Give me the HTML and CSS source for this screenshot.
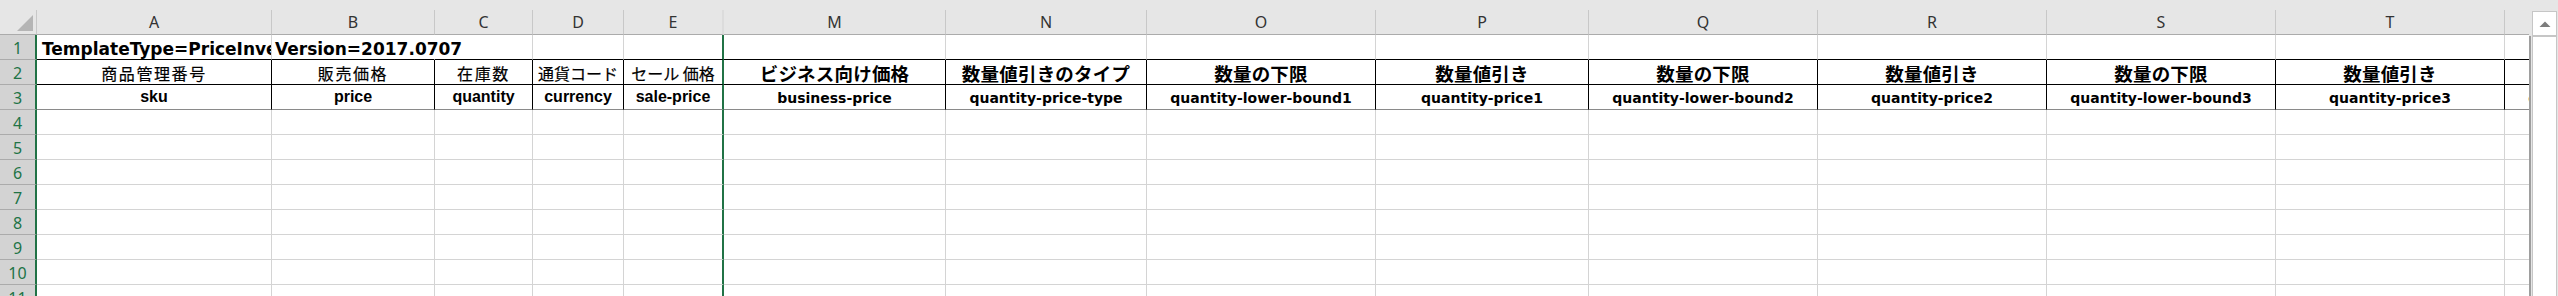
FILE: index.html
```html
<!DOCTYPE html>
<html lang="ja">
<head>
    <meta charset="UTF-8">
    <title>PriceInventory template</title>
    <link rel="stylesheet" href="styles.css">
</head>
<body>
    <div class="app">
        <div class="sheet">
            <div class="grid" id="grid">
                <!-- column headers -->
                <div class="c hd corner">
                    <svg width="36" height="24" viewBox="0 0 36 24"><polygon points="33,5 33,21 17,21" fill="#b5b5b5"/></svg>
                </div>
                <div class="c hd">A</div>
                <div class="c hd">B</div>
                <div class="c hd">C</div>
                <div class="c hd">D</div>
                <div class="c hd fz-hd">E</div>
                <div class="c hd">M</div>
                <div class="c hd">N</div>
                <div class="c hd">O</div>
                <div class="c hd">P</div>
                <div class="c hd">Q</div>
                <div class="c hd">R</div>
                <div class="c hd">S</div>
                <div class="c hd">T</div>
                <div class="c hd">U</div>

                <!-- row 1 -->
                <div class="c rh">1</div>
                <div class="c r1 tpl first">TemplateType=PriceInventory</div>
                <div class="c r1 tpl ovf">Version=2017.0707</div>
                <div class="c r1"></div>
                <div class="c r1"></div>
                <div class="c r1 fz"></div>
                <div class="c r1"></div>
                <div class="c r1"></div>
                <div class="c r1"></div>
                <div class="c r1"></div>
                <div class="c r1"></div>
                <div class="c r1"></div>
                <div class="c r1"></div>
                <div class="c r1"></div>
                <div class="c r1"></div>

                <!-- row 2 -->
                <div class="c rh">2</div>
                <div class="c r2 ja">商品管理番号</div>
                <div class="c r2 ja">販売価格</div>
                <div class="c r2 ja">在庫数</div>
                <div class="c r2 ja tight">通貨コード</div>
                <div class="c r2 ja tight fz">セール 価格</div>
                <div class="c r2 ja-b">ビジネス向け価格</div>
                <div class="c r2 ja-b">数量値引きのタイプ</div>
                <div class="c r2 ja-b">数量の下限</div>
                <div class="c r2 ja-b">数量値引き</div>
                <div class="c r2 ja-b">数量の下限</div>
                <div class="c r2 ja-b">数量値引き</div>
                <div class="c r2 ja-b">数量の下限</div>
                <div class="c r2 ja-b">数量値引き</div>
                <div class="c r2 ja-b">数量の下限</div>

                <!-- row 3 -->
                <div class="c rh">3</div>
                <div class="c r3 key">sku</div>
                <div class="c r3 key">price</div>
                <div class="c r3 key">quantity</div>
                <div class="c r3 key">currency</div>
                <div class="c r3 key fz">sale-price</div>
                <div class="c r3 key-b">business-price</div>
                <div class="c r3 key-b">quantity-price-type</div>
                <div class="c r3 key-b">quantity-lower-bound1</div>
                <div class="c r3 key-b">quantity-price1</div>
                <div class="c r3 key-b">quantity-lower-bound2</div>
                <div class="c r3 key-b">quantity-price2</div>
                <div class="c r3 key-b">quantity-lower-bound3</div>
                <div class="c r3 key-b">quantity-price3</div>
                <div class="c r3 key-b">quantity-lower-bound4</div>
            </div>
        </div>
        <div class="vscroll">
            <div class="vs-btn">
                <svg width="12" height="6" viewBox="0 0 12 6"><polygon points="0.5,6 6,0.5 11.5,6" fill="#7d7d7d"/></svg>
            </div>
            <div class="vs-track">
                <div class="vs-thumb"></div>
            </div>
        </div>
    </div>

    <script>
        // empty rows 4..11
        const grid = document.getElementById('grid');
        for (let r = 4; r <= 11; r++) {
            let html = `<div class="c rh">${r}</div>`;
            for (let i = 0; i < 14; i++) {
                html += `<div class="c${i === 4 ? ' fz' : ''}"></div>`;
            }
            grid.insertAdjacentHTML('beforeend', html);
        }
    </script>
</body>
</html>
```

FILE: styles.css
```css
html, body { margin: 0; padding: 0; }
body { background: #e6e6e6; height: 296px; overflow: hidden; font-family: "Noto Sans", sans-serif; color: #000; }
.app { display: flex; height: 296px; }

.sheet { flex: 0 0 2529px; width: 2529px; padding-top: 10px; overflow: hidden; }
.grid {
    display: grid;
    width: max-content;
    grid-template-columns: 37px 235px 163px 98px 91px 100px 222px 201px 229px 213px 229px 229px 229px 229px 229px;
    grid-auto-rows: 25px;
    background: #fff;
}

.c {
    box-sizing: border-box;
    border-right: 1px solid #d4d4d4;
    border-bottom: 1px solid #d4d4d4;
    display: flex;
    align-items: center;
    justify-content: center;
    white-space: nowrap;
    overflow: hidden;
    min-width: 0;
}

/* headers */
.hd { background: #e6e6e6; border-right-color: #c8c8c8; border-bottom-color: #ababab; color: #333; font-size: 16px; }
.corner { padding: 0; justify-content: flex-start; align-items: flex-start; }
.fz-hd { border-right: 2px solid #dcdcdc; }
.rh { background: #d3d3d3; color: #217346; font-size: 16px; border-right: 2px solid #217346; border-bottom-color: #ababab; padding-top: 2px; }

/* row 1 */
.r1 { border-bottom-color: #000; }
.tpl { font: bold 17px "DejaVu Sans", sans-serif; justify-content: flex-start; align-items: flex-end; padding: 0 0 0 3px; }
.tpl.first { padding-left: 5px; }
.ovf { overflow: visible; border-right-color: transparent; }

/* row 2 */
.r2 { border-right-color: #000; border-bottom-color: #000; }
.ja { font-family: "Noto Sans CJK JP", sans-serif; font-size: 16px; letter-spacing: 1.6px; padding-top: 2px; -webkit-text-stroke: 0.2px #000; }
.tight { letter-spacing: 0; }
.ja-b { font-family: "Noto Sans CJK JP", sans-serif; font-weight: bold; font-size: 18.5px; letter-spacing: 0.2px; padding-top: 1px; }

/* row 3 */
.r3 { border-right-color: #000; border-bottom-color: #8a8a8a; }
.key { font: bold 16px "Liberation Sans", Arial, sans-serif; }
.key-b { font: bold 14px "DejaVu Sans", sans-serif; padding-top: 1px; }
.key-b:last-child { justify-content: flex-start; padding-left: 23px; }

/* frozen pane split */
.c.fz { border-right: 2px solid #217346; }

/* vertical scrollbar */
.vscroll { flex: 0 0 29px; display: flex; flex-direction: column; }
.vs-btn {
    box-sizing: border-box;
    margin: 11px 1px 0 3px;
    height: 25px;
    background: #fff;
    border: 1px solid #c6c6c6;
    display: flex;
    align-items: center;
    justify-content: center;
}
.vs-track { flex: 1; display: flex; border-left: 2px solid #9e9e9e; padding-left: 1px; }
.vs-thumb { flex: 1; margin-right: 1px; background: #fff; border: 1px solid #c6c6c6; border-bottom: none; }
```
